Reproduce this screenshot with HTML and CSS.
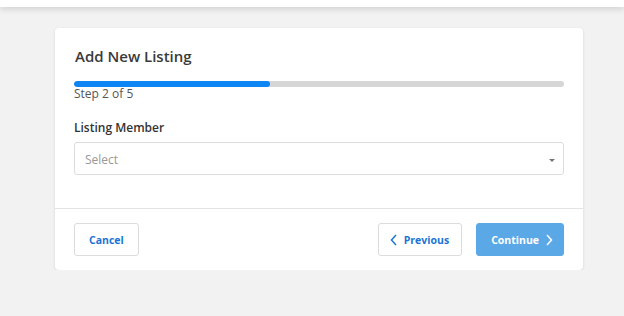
FILE: index.html
```html
<!DOCTYPE html>
<html lang="en">
<head>
  <meta charset="UTF-8">
  <meta name="viewport" content="width=device-width, initial-scale=1.0">
  <title>Add New Listing</title>
  <link rel="stylesheet" href="styles.css">
</head>
<body>
  <div class="topbar"></div>

  <div class="card">
    <div class="card-body">
      <h1>Add New Listing</h1>
      <div class="progress">
        <div class="progress-fill" style="width: 40%;"></div>
      </div>
      <p class="step">Step 2 of 5</p>

      <label for="member">Listing Member</label>
      <div class="select" id="member">
        <span class="placeholder">Select</span>
        <span class="caret"></span>
      </div>
    </div>

    <div class="card-footer">
      <button type="button" class="btn btn-cancel">Cancel</button>
      <div class="nav">
        <button type="button" class="btn btn-prev">
          <svg width="7" height="12" viewBox="0 0 7 12"><path d="M6 1 L1.5 6 L6 11" fill="none" stroke="currentColor" stroke-width="1.5"/></svg>
          Previous
        </button>
        <button type="button" class="btn btn-primary">
          Continue
          <svg width="7" height="12" viewBox="0 0 7 12"><path d="M1 1 L5.5 6 L1 11" fill="none" stroke="currentColor" stroke-width="1.5"/></svg>
        </button>
      </div>
    </div>
  </div>
</body>
</html>
```

FILE: styles.css
```css
body {
  font-family: "Open Sans", Arial, sans-serif;
  margin: 0;
  padding: 0;
  background-color: #f2f2f2;
  color: #333;
}

.topbar {
  height: 7px;
  background-color: white;
  box-shadow: 0 2px 6px rgba(0, 0, 0, 0.15);
}

.card {
  width: 528px;
  margin: 21px 0 0 55px;
  background-color: white;
  border-radius: 4px;
  box-shadow: 0 1px 3px rgba(0, 0, 0, 0.12);
}

.card-body {
  padding: 16px 19px 33px 19px;
}

h1 {
  font-size: 15px;
  font-weight: 600;
  line-height: 24px;
  margin: 0 0 13px 1px;
  color: #3a3a3a;
}

.progress {
  height: 6px;
  background-color: #d6d6d6;
  border-radius: 3px;
  overflow: hidden;
}

.progress-fill {
  height: 100%;
  background-color: #0d85f2;
  border-radius: 3px;
}

.step {
  font-size: 12px;
  line-height: 14px;
  margin: 0;
  color: #555;
}

label {
  display: block;
  font-size: 12px;
  font-weight: 600;
  line-height: 14px;
  margin: 20px 0 7px 0;
  color: #333;
}

.select {
  height: 33px;
  box-sizing: border-box;
  border: 1px solid #dcdcdc;
  border-radius: 3px;
  display: flex;
  align-items: center;
  justify-content: space-between;
  padding: 2px 8px 0 10px;
}

.placeholder {
  font-size: 12px;
  color: #999;
}

.caret {
  width: 0;
  height: 0;
  border-left: 3px solid transparent;
  border-right: 3px solid transparent;
  border-top: 3px solid #777;
  margin-top: 1px;
}

.card-footer {
  border-top: 1px solid #e3e3e3;
  padding: 14px 19px;
  display: flex;
  justify-content: space-between;
}

.nav {
  display: flex;
  gap: 14px;
}

.btn {
  height: 33px;
  box-sizing: border-box;
  padding: 0 13px;
  border: 1px solid #dcdcdc;
  border-radius: 3px;
  background-color: white;
  color: #1b74d4;
  font-family: "Open Sans", Arial, sans-serif;
  font-size: 10.5px;
  font-weight: 700;
  display: flex;
  align-items: center;
  gap: 7px;
  cursor: pointer;
}

.btn-cancel {
  padding: 0 14px;
}

.btn-prev {
  padding: 0 12px 0 11px;
}

.btn-primary {
  background-color: #5aa8e6;
  border-color: #5aa8e6;
  color: white;
  padding: 0 10px 0 14px;
}
```
